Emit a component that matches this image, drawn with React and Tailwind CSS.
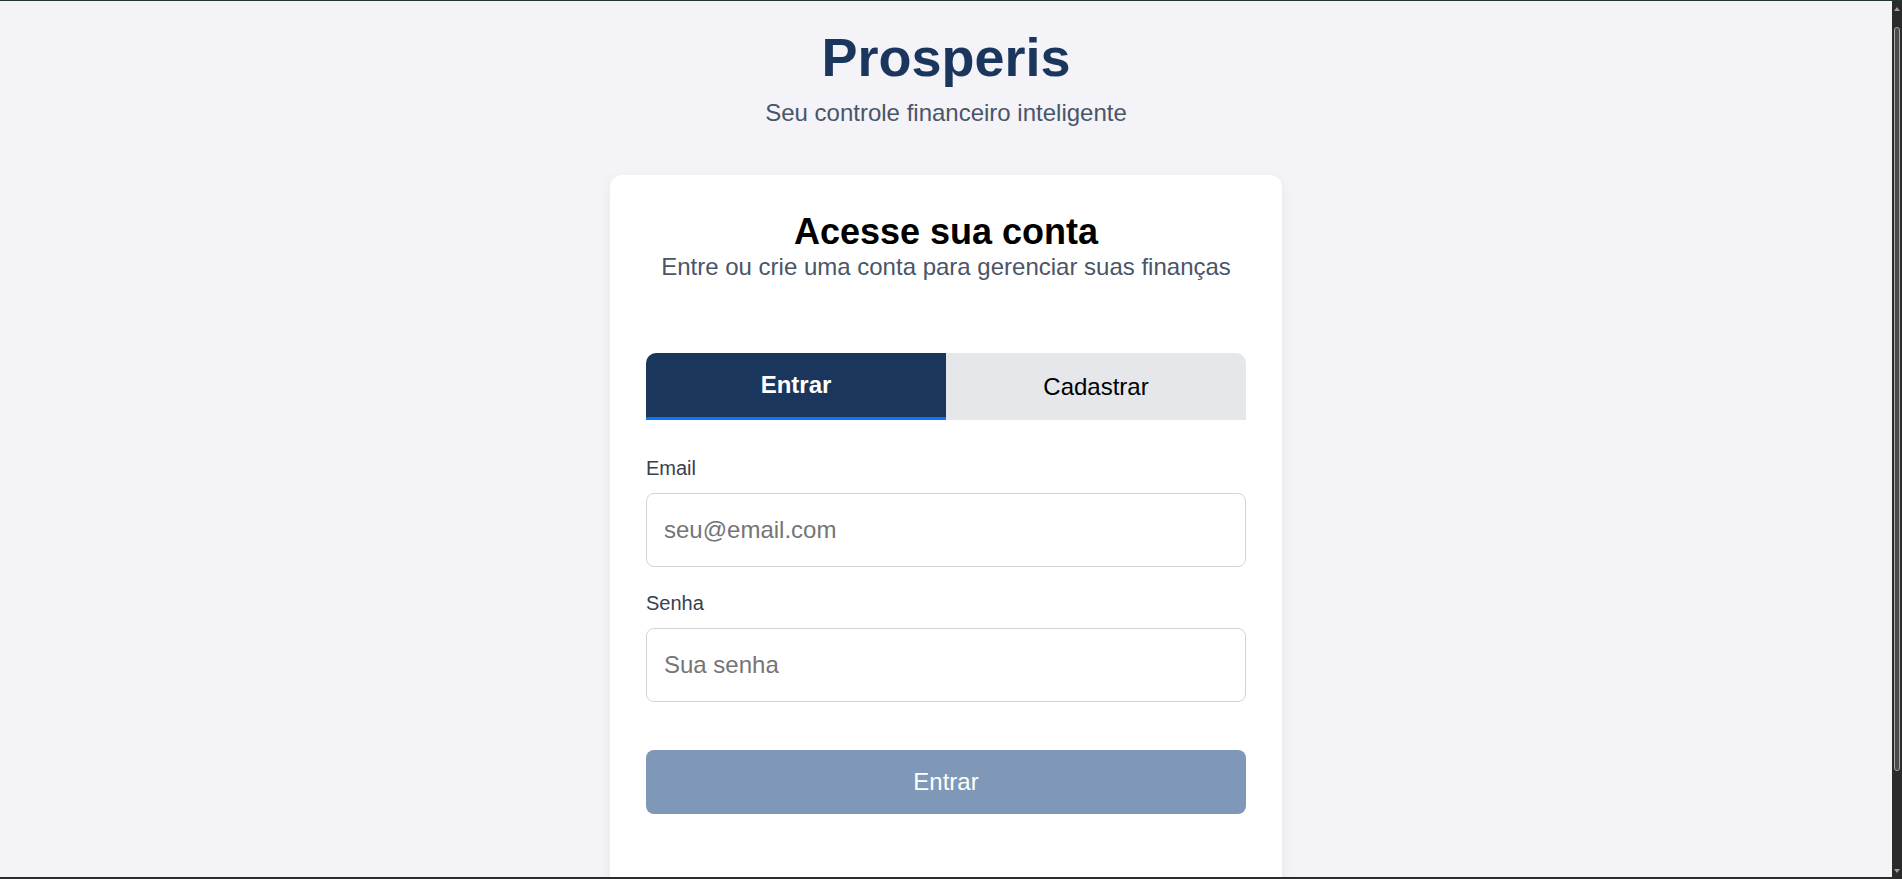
import React from "react";

export default function App() {
  return (
    <div className="h-[879px] w-full overflow-hidden flex flex-col bg-[#2b2b2b] font-['Liberation_Sans','Arial',sans-serif]">
      <div className="h-px bg-[#243532]" />
      <div className="flex flex-1 min-h-0">
        <main className="flex-1 min-w-0 overflow-hidden bg-[#f3f3f8] flex flex-col items-center pt-[25px]">
          <h1 className="text-[54px] leading-[62px] font-bold text-[#1b365d]">Prosperis</h1>
          <p className="mt-[11px] text-[24px] leading-[28px] text-[#4a5568]">Seu controle financeiro inteligente</p>

          <div className="mt-[48px] w-[672px] shrink-0 rounded-xl bg-white shadow-[0_4px_14px_rgba(0,0,0,0.06)] px-[36px] pt-[36px] pb-[80px]">
            <h2 className="text-center text-[36px] leading-[41px] font-bold text-black">Acesse sua conta</h2>
            <p className="mt-[1px] text-center text-[24px] leading-[28px] text-[#4a5568]">Entre ou crie uma conta para gerenciar suas finanças</p>

            <div className="mt-[72px] flex w-full overflow-hidden rounded-t-[10px]">
              <button className="flex-1 h-[67px] bg-[#1b365d] border-b-[3px] border-[#0b76f5] text-white font-bold text-[24px] leading-[28px]">
                Entrar
              </button>
              <button className="flex-1 h-[67px] bg-[#e5e7eb] text-black text-[24px] leading-[28px]">
                Cadastrar
              </button>
            </div>

            <label className="block mt-[37px] mb-[13px] text-[20px] leading-[23px] text-[#374151]">Email</label>
            <input
              type="email"
              placeholder="seu@email.com"
              className="block w-full h-[74px] rounded-lg border border-[#d1d5db] bg-white px-[17px] text-[24px] leading-[28px] text-black placeholder:text-[#757575] outline-none"
            />

            <label className="block mt-[25px] mb-[13px] text-[20px] leading-[23px] text-[#374151]">Senha</label>
            <input
              type="password"
              placeholder="Sua senha"
              className="block w-full h-[74px] rounded-lg border border-[#d1d5db] bg-white px-[17px] text-[24px] leading-[28px] text-black placeholder:text-[#757575] outline-none"
            />

            <button className="mt-[48px] w-full h-[64px] rounded-lg bg-[#7f98b7] text-white text-[24px] leading-[28px]">
              Entrar
            </button>
          </div>
        </main>
        <div className="w-[10px] shrink-0 bg-[#2b2b2b] flex flex-col items-center pt-[6px]">
          <div className="w-0 h-0 border-l-[3px] border-r-[3px] border-b-[4px] border-l-transparent border-r-transparent border-b-[#a0a0a0]" />
          <div className="mt-[16px] w-[6px] h-[744px] rounded-full bg-[#4a4a4a] border border-[#a8a8a8]" />
          <div className="flex-1" />
          <div className="mb-[4px] w-0 h-0 border-l-[3px] border-r-[3px] border-t-[4px] border-l-transparent border-r-transparent border-t-[#a0a0a0]" />
        </div>
      </div>
      <div className="h-[2px] bg-[#2b2b2b]" />
    </div>
  );
}
